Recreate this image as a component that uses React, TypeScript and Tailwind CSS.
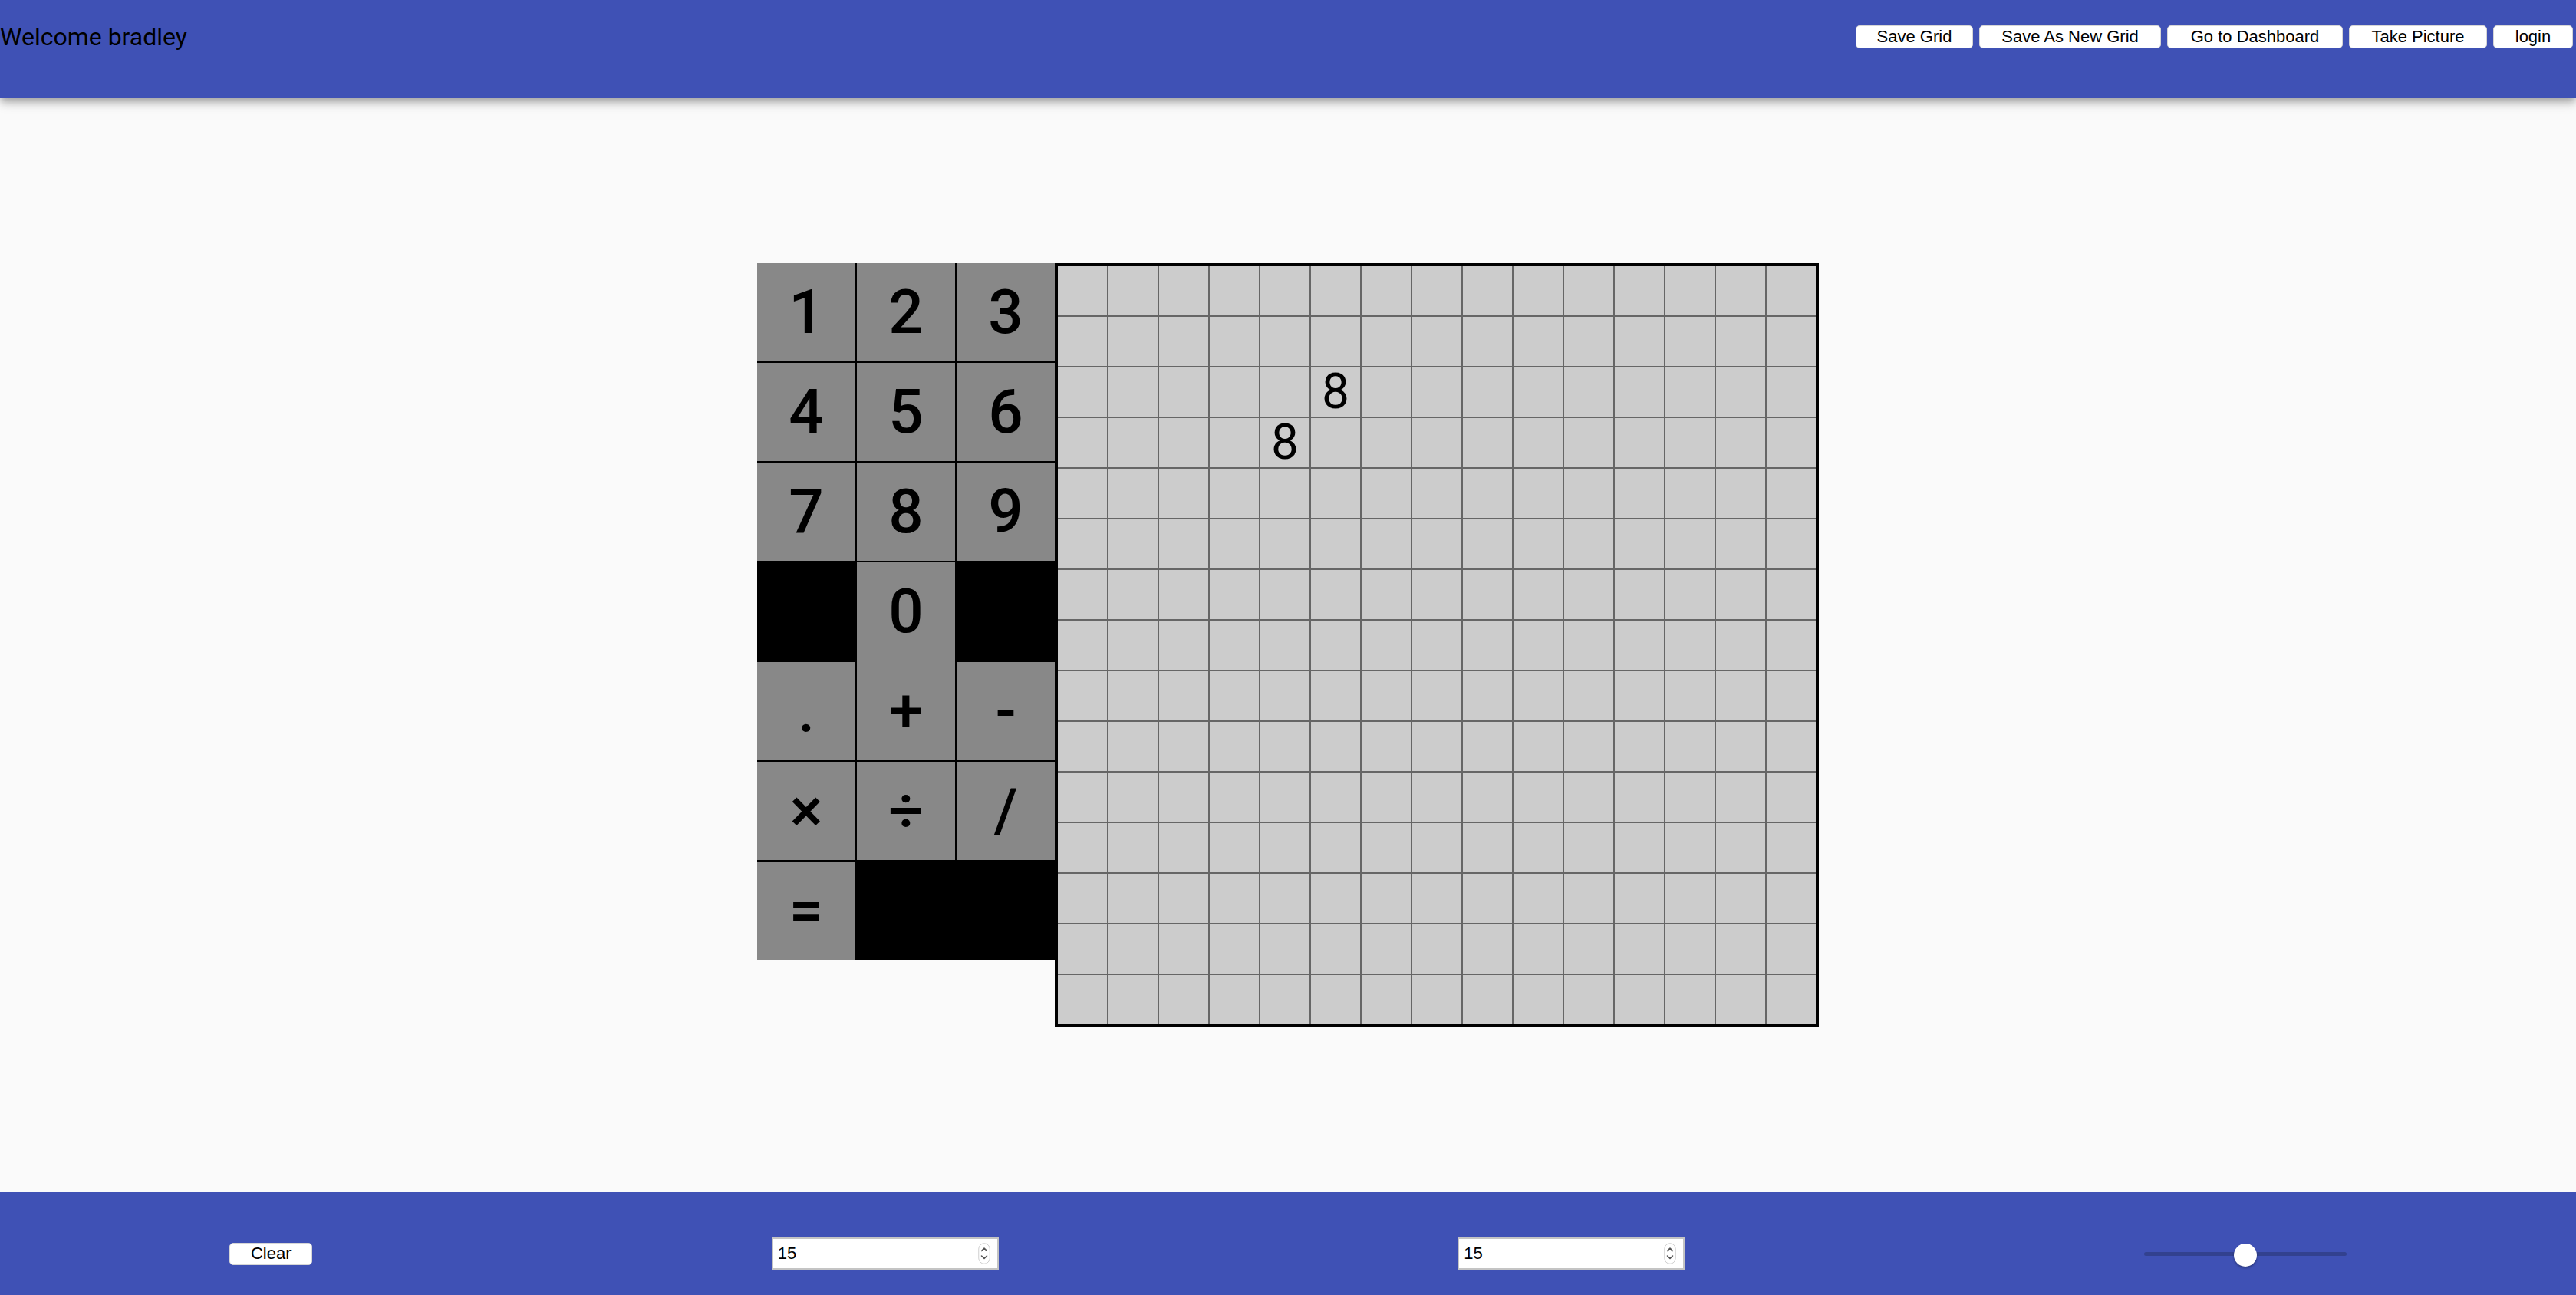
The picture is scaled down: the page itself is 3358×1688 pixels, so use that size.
import React from "react";

const SIZE = 15;

// numbers already typed into the board, keyed "row-col"
const marks: Record<string, string> = { "2-5": "8", "3-4": "8" };

const topButtons = [
  { label: "Save Grid", w: "w-[153px]" },
  { label: "Save As New Grid", w: "w-[237px]" },
  { label: "Go to Dashboard", w: "w-[229px]" },
  { label: "Take Picture", w: "w-[180px]" },
  { label: "login", w: "w-[104px]" },
];

const Key = ({ label }: { label?: string }) => {
  if (!label) return <div className="bg-black" />;
  return (
    <div className="flex items-center justify-center bg-[#888888] font-['Roboto'] text-[80px] leading-none font-medium text-black select-none">
      {label}
    </div>
  );
};

const Spinner = () => (
  <svg width="16" height="28" viewBox="0 0 16 28">
    <rect x="0.75" y="0.75" width="14.5" height="26.5" rx="7.25" fill="#ffffff" stroke="#cfcfcf" strokeWidth="1" />
    <polyline points="4.5,10.5 8,7 11.5,10.5" fill="none" stroke="#555555" strokeWidth="1.6" strokeLinecap="round" strokeLinejoin="round" />
    <polyline points="4.5,17 8,20.5 11.5,17" fill="none" stroke="#555555" strokeWidth="1.6" strokeLinecap="round" strokeLinejoin="round" />
  </svg>
);

const NumberBox = ({ value }: { value: string }) => (
  <div className="flex h-[42px] w-[296px] items-center justify-between border-2 border-[#c4c4c4] bg-white pl-[6px] pr-[9px]">
    <span className="font-['Liberation_Sans'] text-[22px] leading-none text-black">{value}</span>
    <Spinner />
  </div>
);

const App = () => {
  const rows = Array.from({ length: SIZE }, (_, r) => r);
  const cols = Array.from({ length: SIZE }, (_, c) => c);

  return (
    <div className="flex h-screen flex-col bg-[#fafafa]">
      <header className="relative z-10 h-[128px] shrink-0 bg-[#3f51b5] shadow-[0_4px_8px_-2px_rgba(0,0,0,0.2),0_8px_10px_0_rgba(0,0,0,0.14),0_2px_20px_0_rgba(0,0,0,0.12)]">
        <div className="flex h-[96px] items-center justify-between pr-[4px]">
          <h1 className="font-['Roboto'] text-[32px] leading-none font-normal text-black">Welcome bradley</h1>
          <div className="flex gap-[8px]">
            {topButtons.map((b) => (
              <button
                key={b.label}
                className={`${b.w} h-[30px] rounded-[5px] border border-[#d6d6d6] bg-white font-['Liberation_Sans'] text-[22px] leading-none text-black`}
              >
                {b.label}
              </button>
            ))}
          </div>
        </div>
      </header>

      <main className="flex flex-1 items-center justify-center">
        <div className="flex items-start">
          {/* keypad */}
          <div className="grid grid-cols-[repeat(3,128px)] grid-rows-[repeat(7,128px)] gap-[2px] bg-black">
            {["1", "2", "3", "4", "5", "6", "7", "8", "9"].map((k) => (
              <Key key={k} label={k} />
            ))}
            <Key />
            <div className="row-span-2 flex flex-col bg-[#888888] font-['Roboto'] text-[80px] leading-none font-medium text-black">
              <div className="flex h-[128px] items-center justify-center">0</div>
              <div className="h-[2px]" />
              <div className="flex h-[128px] items-center justify-center">+</div>
            </div>
            <Key />
            <Key label="." />
            <Key label="-" />
            <Key label="×" />
            <Key label="÷" />
            <Key label="/" />
            <Key label="=" />
          </div>

          {/* board */}
          <div className="grid grid-cols-[repeat(15,64px)] gap-[2px] border-4 border-black bg-[#666666]">
            {rows.map((r) =>
              cols.map((c) => (
                <div
                  key={`${r}-${c}`}
                  className="flex h-[64px] items-center justify-center bg-[#cccccc] font-['Roboto'] text-[64px] leading-none text-black"
                >
                  {marks[`${r}-${c}`] ?? ""}
                </div>
              ))
            )}
          </div>
        </div>
      </main>

      <footer className="flex h-[134px] shrink-0 items-center justify-around bg-[#3f51b5] pt-[26px]">
        <button className="h-[29px] w-[108px] rounded-[5px] border border-[#d6d6d6] bg-white font-['Liberation_Sans'] text-[22px] leading-none text-black">
          Clear
        </button>
        <NumberBox value="15" />
        <NumberBox value="15" />
        <div className="relative flex h-[30px] w-[264px] items-center">
          <div className="h-[5px] w-full rounded-full bg-[#32418f]" />
          <div className="absolute left-1/2 top-[17px] size-[30px] -translate-x-1/2 -translate-y-1/2 rounded-full bg-white shadow-[0_2px_3px_rgba(0,0,0,0.3)]" />
        </div>
      </footer>
    </div>
  );
};

export default App;
